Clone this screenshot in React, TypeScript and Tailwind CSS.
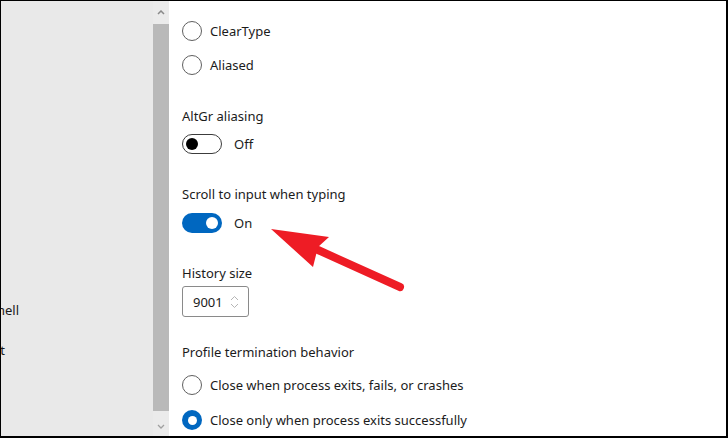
import React from "react";

const font = { fontFamily: '"Noto Sans", "Open Sans", sans-serif' };

function Radio({ checked, label }: { checked?: boolean; label: string }) {
  return (
    <div className="flex h-[20px] items-center">
      {checked ? (
        <div className="flex h-[20px] w-[20px] items-center justify-center rounded-full bg-[#0067c0]">
          <div className="h-[9px] w-[9px] rounded-full bg-white" />
        </div>
      ) : (
        <div className="h-[20px] w-[20px] rounded-full border border-[#5f5f5f] bg-white" />
      )}
      <span className="ml-[8px] text-[13px] leading-[20px] text-[#1b1b1b]">{label}</span>
    </div>
  );
}

function Toggle({ on }: { on?: boolean }) {
  return (
    <div className="flex h-[20px] items-center">
      {on ? (
        <div className="flex h-[20px] w-[40px] items-center justify-end rounded-full bg-[#0067c0] pr-[4px]">
          <div className="h-[12px] w-[12px] rounded-full bg-white" />
        </div>
      ) : (
        <div className="flex h-[20px] w-[40px] items-center rounded-full border border-[#3c3c3c] pl-[3px]">
          <div className="h-[12px] w-[12px] rounded-full bg-black" />
        </div>
      )}
      <span className="ml-[12px] text-[13px] leading-[20px] text-[#1b1b1b]">{on ? "On" : "Off"}</span>
    </div>
  );
}

function Label({ children }: { children: React.ReactNode }) {
  return <div className="h-[20px] text-[13px] leading-[20px] text-[#1b1b1b]">{children}</div>;
}

export default function App() {
  return (
    <div className="relative h-[438px] w-[728px] overflow-hidden bg-white" style={font}>
      <div className="flex h-full w-full border-b-2 border-l border-r-2 border-t border-black">
        {/* left nav panel */}
        <div className="flex w-[152px] flex-col overflow-hidden bg-[#e9e9e9]">
          <div className="mt-[299px] flex w-[18px] justify-end whitespace-nowrap text-[13px] leading-[20px] text-[#1b1b1b]">
            PowerShell
          </div>
          <div className="mt-[20px] flex w-[4px] justify-end whitespace-nowrap text-[13px] leading-[20px] text-[#1b1b1b]">
            Command Prompt
          </div>
        </div>
        {/* scrollbar */}
        <div className="flex w-[16px] flex-col bg-[#ebebeb]">
          <div className="flex h-[23px] items-center justify-center">
            <svg width="8" height="5" viewBox="0 0 8 5">
              <path d="M1 4 L4 1 L7 4" fill="none" stroke="#8a8a8a" strokeWidth="1.5" />
            </svg>
          </div>
          <div className="h-[387px] bg-[#b9b9b9]" />
          <div className="flex flex-1 items-center justify-center pt-[6px]">
            <svg width="8" height="5" viewBox="0 0 8 5">
              <path d="M1 1 L4 4 L7 1" fill="none" stroke="#a0a0a0" strokeWidth="1.3" />
            </svg>
          </div>
        </div>
        {/* main */}
        <div className="flex flex-1 flex-col bg-white pl-[13px]">
          <div className="mt-[20px]">
            <Radio label="ClearType" />
          </div>
          <div className="mt-[14px]">
            <Radio label="Aliased" />
          </div>
          <div className="mt-[31px]">
            <Label>AltGr aliasing</Label>
          </div>
          <div className="mt-[8px]">
            <Toggle />
          </div>
          <div className="mt-[30px]">
            <Label>Scroll to input when typing</Label>
          </div>
          <div className="mt-[9px]">
            <Toggle on />
          </div>
          <div className="mt-[30px]">
            <Label>History size</Label>
          </div>
          <div className="mt-[3px] flex h-[31px] w-[67px] items-center rounded-[3px] border border-[#8a8a8a] pl-[10px]">
            <span className="text-[13px] leading-[20px] text-[#1b1b1b]">9001</span>
            <svg className="ml-[7px]" width="9" height="14" viewBox="0 0 9 14">
              <path d="M1 5 L4.5 1.5 L8 5" fill="none" stroke="#b5b5b5" strokeWidth="1" />
              <path d="M1 9 L4.5 12.5 L8 9" fill="none" stroke="#b5b5b5" strokeWidth="1" />
            </svg>
          </div>
          <div className="mt-[25px]">
            <Label>Profile termination behavior</Label>
          </div>
          <div className="mt-[13px]">
            <Radio label="Close when process exits, fails, or crashes" />
          </div>
          <div className="mt-[15px]">
            <Radio checked label="Close only when process exits successfully" />
          </div>
        </div>
      </div>
      {/* annotation arrow */}
      <svg className="pointer-events-none absolute left-0 top-0" width="728" height="438" viewBox="0 0 728 438">
        <line x1="318" y1="250" x2="400" y2="287" stroke="#ee1c25" strokeWidth="8" strokeLinecap="round" />
        <polygon points="271,229 329,237 318,247 313,267" fill="#ee1c25" />
      </svg>
    </div>
  );
}
